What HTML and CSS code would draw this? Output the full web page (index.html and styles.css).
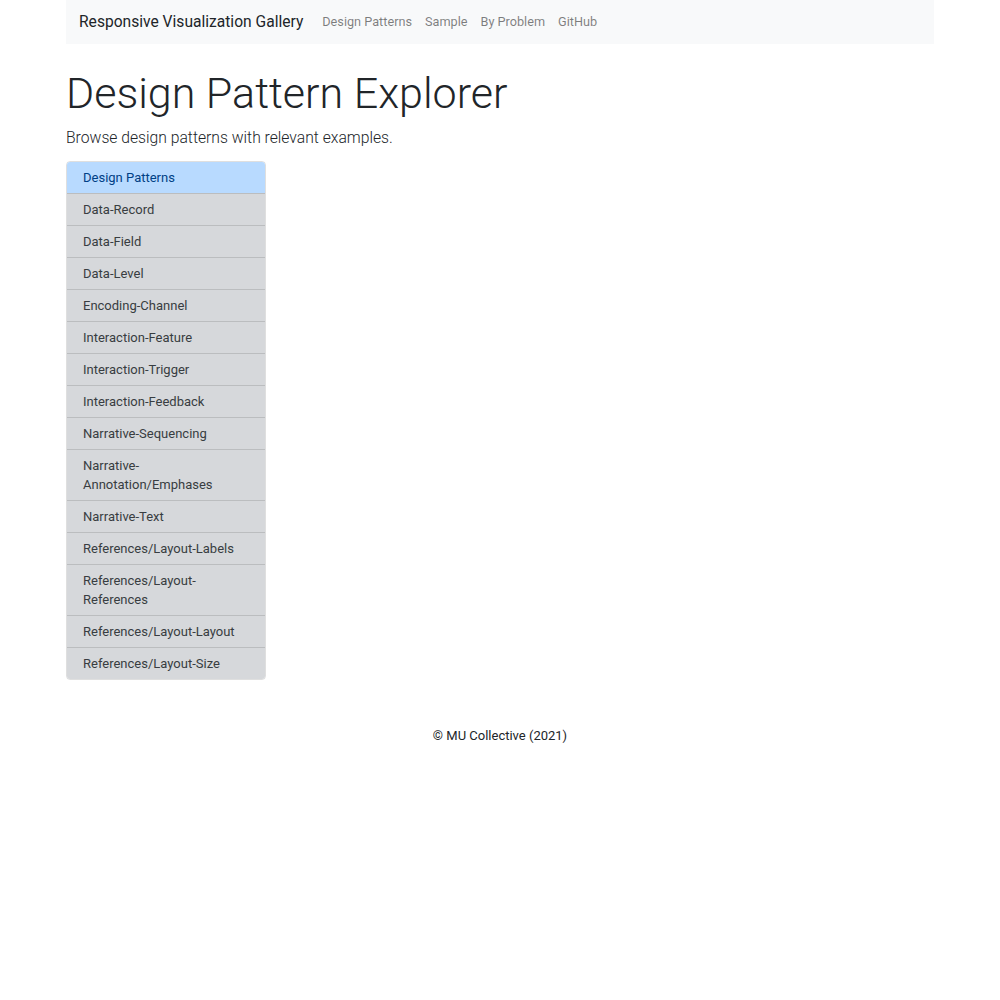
FILE: index.html
```html
<html>
  <head>
    <title>Design Pattern Explorer</title>
    <meta charset="utf-8" />
    <link rel="stylesheet" href="styles.css">
  </head>
  <body>
    <div class="container">
      <nav class="navbar">
        <a class="navbar-brand" href="#">Responsive Visualization Gallery</a>
        <ul class="nav-links">
          <li><a href="#">Design Patterns</a></li>
          <li><a href="#">Sample</a></li>
          <li><a href="#">By Problem</a></li>
          <li><a href="#">GitHub</a></li>
        </ul>
      </nav>

      <h1 class="display">Design Pattern Explorer</h1>
      <p class="lead">Browse design patterns with relevant examples.</p>

      <ul class="list-group">
        <li class="item active">Design Patterns</li>
        <li class="item">Data-Record</li>
        <li class="item">Data-Field</li>
        <li class="item">Data-Level</li>
        <li class="item">Encoding-Channel</li>
        <li class="item">Interaction-Feature</li>
        <li class="item">Interaction-Trigger</li>
        <li class="item">Interaction-Feedback</li>
        <li class="item">Narrative-Sequencing</li>
        <li class="item">Narrative-Annotation/Emphases</li>
        <li class="item">Narrative-Text</li>
        <li class="item">References/Layout-Labels</li>
        <li class="item">References/Layout-References</li>
        <li class="item">References/Layout-Layout</li>
        <li class="item">References/Layout-Size</li>
      </ul>
    </div>

    <footer class="footer">© MU Collective (2021)</footer>
  </body>
</html>
```

FILE: styles.css
```css
  html, body {
    margin: 0px;
    padding: 0px;
    background-color: #fff;
    color: #212529;
    font-family: Roboto, "Noto Sans", sans-serif;
    font-size: 13px;
  }

  .container {
    width: 868px;
    margin: 0 auto;
  }

  /* 导航栏 */
  .navbar {
    display: flex;
    align-items: center;
    height: 44px;
    padding: 0 13px;
    background-color: #f8f9fa;
  }

  .navbar-brand {
    font-size: 15.6px;
    color: #212529;
    text-decoration: none;
    margin-right: 19px;
    margin-bottom: 1px;
  }

  .nav-links {
    display: flex;
    gap: 13px;
    margin: 0 0 1px 0;
    padding: 0;
    list-style-type: none;
    font-size: 12.7px;
  }

  .nav-links a {
    color: rgba(0, 0, 0, 0.5);
    text-decoration: none;
  }

  .display {
    margin: 24px 0 0 0;
    font-size: 43px;
    font-weight: 300;
    line-height: 1.2;
  }

  .lead {
    margin: 8px 0 14px 0;
    font-size: 15.7px;
    font-weight: 300;
  }

  /* 列表 */
  .list-group {
    width: 200px;
    margin: 0;
    padding: 0;
    list-style-type: none;
    border-radius: 4px;
    overflow: hidden;
    border: 1px solid rgba(0, 0, 0, 0.125);
    box-sizing: border-box;
  }

  .item {
    padding: 6px 16px;
    line-height: 19px;
    background-color: #d6d8db;
    color: #383d41;
    border-top: 1px solid rgba(0, 0, 0, 0.125);
  }

  .item:first-child {
    border-top: none;
  }

  .item.active {
    background-color: #b8daff;
    color: #004085;
  }

  .footer {
    margin-top: 46px;
    text-align: center;
    line-height: 19px;
  }
```
